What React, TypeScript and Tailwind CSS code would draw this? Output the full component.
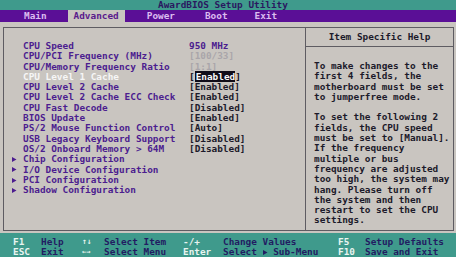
import React from "react";

type Row = { label: string; value?: string; kind?: "normal" | "purple" | "dim" | "sel"; arrow?: boolean; selected?: boolean };

const rows: Row[] = [
  { label: "CPU Speed", value: "950 MHz", kind: "purple" },
  { label: "CPU/PCI Frequency (MHz)", value: "[100/33]", kind: "dim" },
  { label: "CPU/Memory Frequency Ratio", value: "[1:1]", kind: "dim" },
  { label: "CPU Level 1 Cache", value: "Enabled", kind: "sel", selected: true },
  { label: "CPU Level 2 Cache", value: "[Enabled]" },
  { label: "CPU Level 2 Cache ECC Check", value: "[Enabled]" },
  { label: "CPU Fast Decode", value: "[Disabled]" },
  { label: "BIOS Update", value: "[Enabled]" },
  { label: "PS/2 Mouse Function Control", value: "[Auto]" },
  { label: "USB Legacy Keyboard Support", value: "[Disabled]" },
  { label: "OS/2 Onboard Memory > 64M", value: "[Disabled]" },
  { label: "Chip Configuration", arrow: true },
  { label: "I/O Device Configuration", arrow: true },
  { label: "PCI Configuration", arrow: true },
  { label: "Shadow Configuration", arrow: true },
];

const help = [
  "To make changes to the",
  "first 4 fields, the",
  "motherboard must be set",
  "to jumperfree mode.",
  "\u00a0",
  "To set the following 2",
  "fields, the CPU speed",
  "must be set to [Manual].",
  "If the frequency",
  "multiple or bus",
  "frequency are adjusted",
  "too high, the system may",
  "hang. Please turn off",
  "the system and then",
  "restart to set the CPU",
  "settings.",
];

function Tri({ color }: { color: string }) {
  return (
    <svg width="5" height="5" viewBox="0 0 5 5" className="inline-block">
      <polygon points="0,0 4.5,2.5 0,5" fill={color} />
    </svg>
  );
}

const KEY = "text-[#e8f4f0]";

export default function App() {
  return (
    <div
      className="w-[456px] h-[257px] overflow-hidden flex flex-col bg-[#c9c5c0] font-bold text-[9.4px] leading-[10.3px]"
      style={{ fontFamily: '"DejaVu Sans Mono", "Liberation Mono", monospace' }}
    >
      {/* title */}
      <div className="h-[10px] bg-[#3f9a8c] flex justify-center pr-[10px] text-[#2a1860] leading-[10px]">
        AwardBIOS Setup Utility
      </div>
      {/* menu */}
      <div className="h-[12px] bg-[#5a0f96] flex items-center text-[#dcbcf0] leading-[12px] pl-[24px]">
        <span>Main</span>
        <span className="ml-[21px] h-[12px] px-[6px] bg-[#c9c5c0] text-[#5a1a8c]">Advanced</span>
        <span className="ml-[22px]">Power</span>
        <span className="ml-[30px]">Boot</span>
        <span className="ml-[27px]">Exit</span>
      </div>
      {/* main */}
      <div className="flex-1 pt-[5px] pb-[2px] pl-[3px]">
        <div className="w-[451px] h-[204px] border border-[#5e5c62] flex">
          <div className="w-[301px] pt-[13px] pl-[8px]">
            {rows.map((r) => (
              <div key={r.label} className="flex h-[10.3px]">
                <div className="w-[11px] flex items-center">
                  {r.arrow && <Tri color="#4c1d8f" />}
                </div>
                <div className={`w-[166px] whitespace-pre ${r.selected ? "text-[#f6f6f6]" : "text-[#4c1d8f]"}`}>
                  {r.label}
                </div>
                <div className="whitespace-pre">
                  {r.kind === "purple" && <span className="text-[#4c1d8f]">{r.value}</span>}
                  {r.kind === "dim" && <span className="text-[#a9a5aa]">{r.value}</span>}
                  {r.kind === "sel" && (
                    <span className="text-[#141020]">
                      [<span className="bg-[#100c18] text-[#f8f8f8] pl-[1px]">{r.value}</span>]
                    </span>
                  )}
                  {r.kind === undefined && r.value && <span className="text-[#1c1a2a]">{r.value}</span>}
                </div>
              </div>
            ))}
          </div>
          <div className="flex-1 border-l border-[#5e5c62] flex flex-col">
            <div className="h-[19px] border-b border-[#5e5c62] flex items-center justify-center text-[#1c1a2a]">
              Item Specific Help
            </div>
            <div className="pt-[14px] pl-[8px] text-[#1c1a2a]">
              {help.map((l, i) => (
                <div key={i} className="h-[10.3px] whitespace-pre">{l}</div>
              ))}
            </div>
          </div>
        </div>
      </div>
      {/* status */}
      <div className="h-[24px] bg-[#3f9a8c] pt-[4px] pl-[13px] grid grid-cols-[28px_41px_22px_79px_40px_115px_27px_1fr] leading-[10px] text-[#221c62]">
        <span className={KEY}>F1</span>
        <span>Help</span>
        <span className={`${KEY} text-[8px]`}>↑↓</span>
        <span>Select Item</span>
        <span className={KEY}>-/+</span>
        <span>Change Values</span>
        <span className={KEY}>F5</span>
        <span>Setup Defaults</span>
        <span className={KEY}>ESC</span>
        <span>Exit</span>
        <span className={`${KEY} text-[7px]`}>←→</span>
        <span>Select Menu</span>
        <span className={KEY}>Enter</span>
        <span className="whitespace-pre flex items-center">Select <Tri color="#221c62" /> Sub-Menu</span>
        <span className={KEY}>F10</span>
        <span>Save and Exit</span>
      </div>
    </div>
  );
}
